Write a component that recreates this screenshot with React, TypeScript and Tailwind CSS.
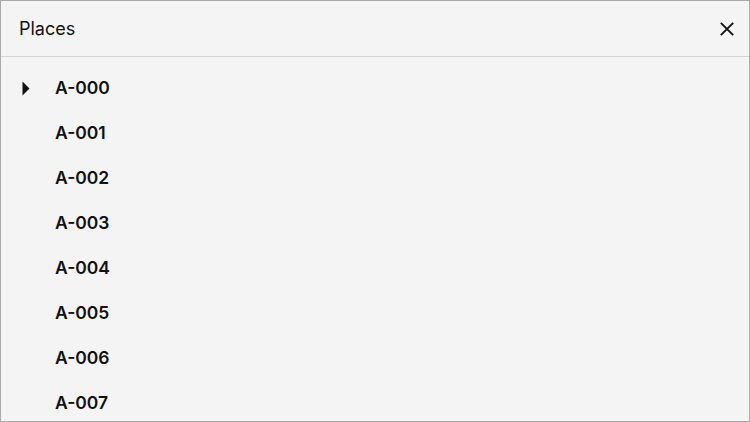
import React from "react";

export default function App() {
  const items = ["A-000", "A-001", "A-002", "A-003", "A-004", "A-005", "A-006", "A-007"];
  return (
    <div
      className="w-[750px] h-[422px] bg-[#f4f4f4] border border-[#a9a9a9] overflow-hidden flex flex-col text-[#111]"
      style={{ fontFamily: 'Inter, "Liberation Sans", Arial, sans-serif' }}
    >
      <div className="h-[56px] shrink-0 flex items-center justify-between pl-[18px] pr-[15px] border-b border-[#d4d4d4]">
        <span className="text-[18px]">Places</span>
        <svg width="14" height="14" viewBox="0 0 14 14">
          <path d="M0.8 0.8L13.2 13.2M13.2 0.8L0.8 13.2" stroke="#111" strokeWidth="1.9" />
        </svg>
      </div>
      <div className="pt-[9px] flex flex-col">
        {items.map((it, i) => (
          <div key={it} className="h-[45px] flex items-center shrink-0">
            <div className="w-[54px] flex items-center pl-[21px]">
              {i === 0 && (
                <svg width="8" height="15" viewBox="0 0 8 15">
                  <path d="M0.5 0.5L7.5 7.5L0.5 14.5Z" fill="#111" />
                </svg>
              )}
            </div>
            <span className="text-[17.5px] font-semibold">{it}</span>
          </div>
        ))}
      </div>
    </div>
  );
}
